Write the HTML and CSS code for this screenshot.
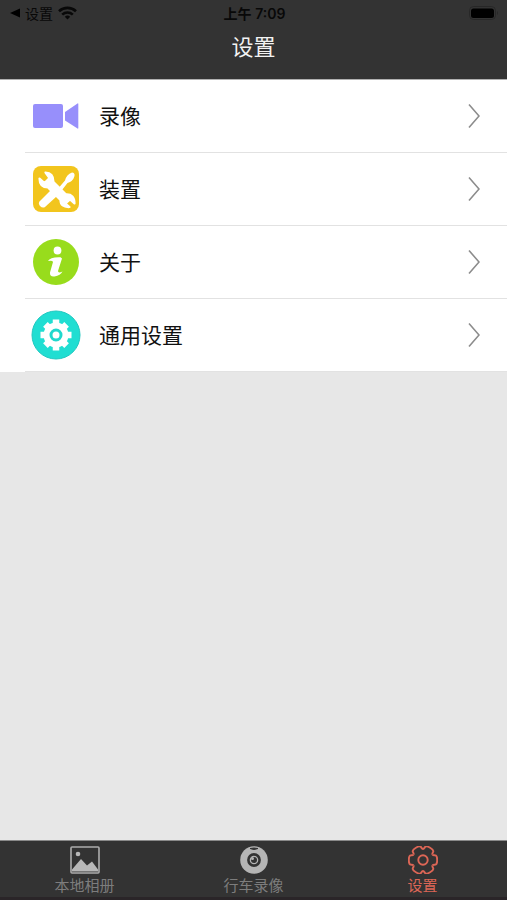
FILE: index.html
```html
<!DOCTYPE html>
<html lang="zh-CN">
<head>
<meta charset="utf-8">
<meta name="viewport" content="width=device-width, initial-scale=1">
<title>设置</title>
<link rel="stylesheet" href="styles.css">
</head>
<body>
<header class="header">
  <div class="status">
    <a class="status-back" href="#">
      <svg width="10" height="10" viewBox="0 0 10 10" aria-hidden="true"><path d="M0 5 10 .5v9z"/></svg>
      <span>设置</span>
      <svg width="19" height="14" viewBox="0 0 19 14" fill="none" stroke="#080808" stroke-width="2.6" aria-hidden="true"><path d="M1 5.2a12.4 12.4 0 0 1 17 0M4.2 8.6a7.8 7.8 0 0 1 10.6 0"/><path d="M9.500 13.500 6.800 10.800a4 4 0 0 1 5.400 0z" fill="#080808" stroke="none"/></svg>
    </a>
    <span class="status-time">上午 7:09</span>
    <svg class="battery" width="30" height="14" viewBox="0 0 30 14" aria-hidden="true"><rect x=".5" y=".5" width="26" height="13" rx="4" fill="none" stroke="#272727"/><rect x="2" y="2.500" width="23" height="9.500" rx="2.500" fill="#000"/><path d="M28 5q2 2 0 4z" fill="#272727"/></svg>
  </div>
  <h1 class="title">设置</h1>
</header>

<main class="content">
  <ul class="list">
    <li><a class="row" href="#">
      <svg class="icon" viewBox="0 0 50 50" fill="#978ffb" aria-hidden="true"><rect x="2" y="13" width="30" height="24" rx="2"/><path d="M34 21 46.500 12.500q.8-.5.8.5v24q0 1-.8.5L34 29.500z"/></svg>
      <span class="label">录像</span>
      <svg class="chevron" viewBox="0 0 12 26" aria-hidden="true"><path d="M1 1.500 11 13 1 24.500"/></svg>
    </a></li>
    <li><a class="row" href="#">
      <svg class="icon" viewBox="0 0 50 50" aria-hidden="true">
        <rect x="2" y="2" width="46" height="46" rx="8" fill="#f2c51d"/>
        <g fill="#fff">
          <path d="M8.500 37.500 19.500 26.500 25.500 32.500 14 43Q11.500 44.500 9 42 7 39.500 8.500 37.500z"/>
          <path d="M28 23.500 34 16.500Q35.500 10.500 41 8.500 44 8.500 43.500 12 42 17.500 36.500 19L31 26z"/>
          <path d="M14.500 8.500Q22.500 8.500 22.500 18L35 30.500Q43.500 30 43.500 39.500L39 35.500 34.500 39.500 38.500 43Q29.500 43.500 29.500 36L17 23.500Q8.500 23.500 8.500 14.500L13.500 19 18.500 14z" stroke="#fff" stroke-width="2.200" stroke-linejoin="round"/>
        </g>
      </svg>
      <span class="label">装置</span>
      <svg class="chevron" viewBox="0 0 12 26" aria-hidden="true"><path d="M1 1.500 11 13 1 24.500"/></svg>
    </a></li>
    <li><a class="row" href="#">
      <svg class="icon" viewBox="0 0 50 50" aria-hidden="true">
        <circle cx="25" cy="25" r="23" fill="#98dc1c"/>
        <circle cx="26.500" cy="13.500" r="3.900" fill="#fff"/>
        <path d="M17 24Q19 19.800 29.500 20.200L31 21.500 27 34Q27 36.500 31.500 34.500 29.500 38.500 23.500 39.500 18.500 40 19 35.500L22 25Q21.500 23 17 24z" fill="#fff"/>
      </svg>
      <span class="label">关于</span>
      <svg class="chevron" viewBox="0 0 12 26" aria-hidden="true"><path d="M1 1.500 11 13 1 24.500"/></svg>
    </a></li>
    <li><a class="row" href="#">
      <svg class="icon" viewBox="0 0 50 50" aria-hidden="true">
        <circle cx="25" cy="25" r="24" fill="#20ded2" stroke="#20c8c0"/>
        <g stroke="#fff" stroke-width="6.500"><path d="M25 9.500v31M9.500 25h31M14.400 14.400l21.200 21.200M35.600 14.400 14.400 35.600"/></g>
        <circle cx="25" cy="25" r="12.500" fill="#fff"/>
        <circle cx="25" cy="25" r="5" fill="#fff" stroke="#20d8cd" stroke-width="3"/>
      </svg>
      <span class="label">通用设置</span>
      <svg class="chevron" viewBox="0 0 12 26" aria-hidden="true"><path d="M1 1.500 11 13 1 24.500"/></svg>
    </a></li>
  </ul>
</main>

<nav class="tabs">
  <a class="tab" href="#">
    <svg class="tab-icon" viewBox="0 0 30 28" aria-hidden="true"><rect x="1" y="1" width="28" height="26" rx="1" fill="none" stroke="#adadad" stroke-width="1.600"/><circle cx="8" cy="8" r="2.300" fill="#b8b8b8"/><path d="M2 25.500v-2L11 13l6 6.500 5-4 6 8v2z" fill="#b8b8b8"/></svg>
    <span>本地相册</span>
  </a>
  <a class="tab" href="#">
    <svg class="tab-icon" viewBox="0 0 30 28" aria-hidden="true"><circle cx="15" cy="14" r="13.800" fill="#b5b5b5"/><circle cx="15" cy="14" r="5.600" fill="#b5b5b5" stroke="#333" stroke-width="2.600"/><circle cx="15" cy="14" r="3" fill="#333"/><circle cx="13.500" cy="12.500" r="1.500" fill="#b5b5b5"/><path d="M11 2.500q4-1 8 0-4 2-8 0z" fill="#333" stroke="#333"/></svg>
    <span>行车录像</span>
  </a>
  <a class="tab tab-active" href="#" aria-current="page">
    <svg class="tab-icon" viewBox="-15 -14 30 28" fill="none" stroke="#dc6656" stroke-width="1.900" aria-hidden="true">
      <defs><path id="lobe" d="M9.500-5.500C10.300-4.200 11.800-5.200 12.900-4.500 14.200-3.600 14.200-2 14.200 0 14.200 2 14.200 3.600 12.900 4.500 11.800 5.200 10.300 4.200 9.500 5.500"/></defs>
      <use href="#lobe"/><use href="#lobe" transform="rotate(60)"/><use href="#lobe" transform="rotate(120)"/><use href="#lobe" transform="rotate(180)"/><use href="#lobe" transform="rotate(240)"/><use href="#lobe" transform="rotate(300)"/>
      <circle r="4.700"/>
    </svg>
    <span>设置</span>
  </a>
</nav>
</body>
</html>
```

FILE: styles.css
```css
* { box-sizing: border-box; }

body {
  margin: 0;
  min-height: 100vh;
  display: flex;
  flex-direction: column;
  background: #e7e7e7;
  color: #111;
  font-family: Inter, "Noto Sans CJK SC", sans-serif;
}

a { color: inherit; text-decoration: none; }

.header {
  background: #333;
  border-bottom: 1px solid #b0b0b0;
  padding-bottom: 15px;
}

.status {
  display: grid;
  grid-template-columns: 1fr auto 1fr;
  align-items: center;
  height: 26px;
  padding: 0 8px 0 10px;
  font-size: 14px;
  color: #080808;
}

.status-back {
  display: flex;
  align-items: center;
  gap: 5px;
}

.status-time { font-weight: 600; }

.battery { justify-self: end; }

.title {
  margin: 4px 0 0;
  font-size: 22px;
  line-height: 34px;
  font-weight: 400;
  text-align: center;
  color: #f2f2f2;
}

.content { flex: 1; }

.list {
  margin: 0;
  padding: 0;
  list-style: none;
  background: #fff;
}

.row {
  display: flex;
  align-items: center;
  height: 73px;
  padding: 0 27px 0 6px;
  margin-left: 25px;
  border-bottom: 1px solid #e2e2e2;
}

.icon { width: 50px; height: 50px; }

.label {
  flex: 1;
  margin-left: 18px;
  padding-top: 2px;
  font-size: 21px;
  line-height: 30px;
}

.chevron {
  width: 12px;
  height: 26px;
  fill: none;
  stroke: #8c8c8c;
  stroke-width: 1.6;
}

.tabs {
  display: flex;
  background: #333;
  border-top: 1px solid #8a8a8a;
  border-bottom: 3px solid #2a2528;
}

.tab {
  flex: 1;
  display: flex;
  flex-direction: column;
  align-items: center;
  padding-top: 5px;
  font-size: 15px;
  line-height: 23px;
  color: #7d7d7d;
}

.tab-icon { width: 30px; height: 28px; }

.tab-active { color: #dc6656; }
```
